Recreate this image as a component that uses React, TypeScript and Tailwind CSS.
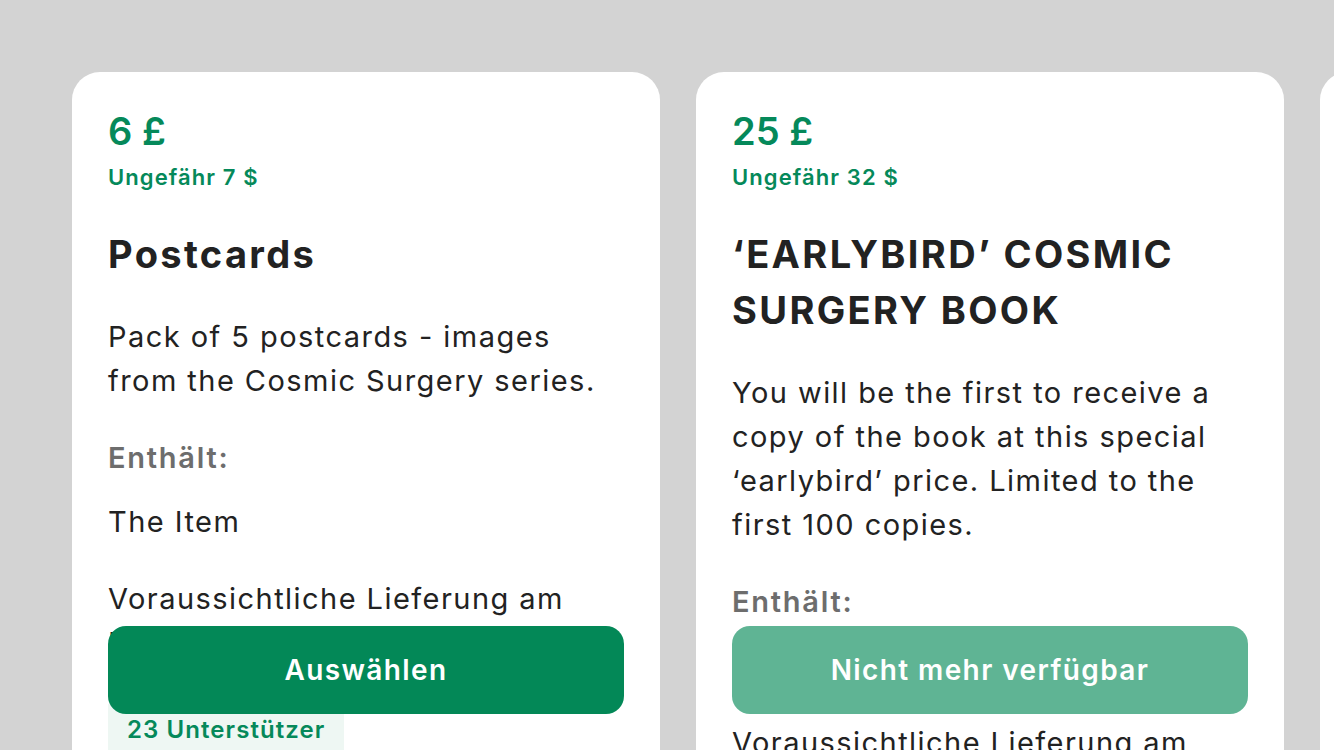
import React from "react";

interface Reward {
  price: string;
  approx: string;
  title: string;
  description: string;
  includes: string[];
  delivery: string;
  backers?: string;
  available: boolean;
}

const rewards: Reward[] = [
  {
    price: "6 £",
    approx: "Ungefähr 7 $",
    title: "Postcards",
    description: "Pack of 5 postcards - images from the Cosmic Surgery series.",
    includes: ["The Item"],
    delivery: "Voraussichtliche Lieferung am Dez. 2018",
    backers: "23 Unterstützer",
    available: true,
  },
  {
    price: "25 £",
    approx: "Ungefähr 32 $",
    title: "‘EARLYBIRD’ COSMIC SURGERY BOOK",
    description:
      "You will be the first to receive a copy of the book at this special ‘earlybird’ price. Limited to the first 100 copies.",
    includes: ["The Item"],
    delivery: "Voraussichtliche Lieferung am Dez. 2018",
    backers: "100 Unterstützer",
    available: false,
  },
  {
    price: "30 £",
    approx: "Ungefähr 38 $",
    title: "Cosmic Surgery Book",
    description: "A copy of the book.",
    includes: ["The Item"],
    delivery: "Voraussichtliche Lieferung am Dez. 2018",
    available: true,
  },
];

function RewardCard({ reward }: { reward: Reward }) {
  return (
    <article className="relative h-[760px] w-[588px] shrink-0 overflow-hidden rounded-[28px] bg-white px-9 pt-9">
      <p className="text-[38px] font-semibold leading-[46px] text-[#05895a]">{reward.price}</p>
      <p className="mt-[9px] text-[22px] font-semibold leading-[28px] tracking-[0.05em] text-[#05895a]">
        {reward.approx}
      </p>
      <h2 className="mt-[35px] text-[38px] font-bold leading-[56px] tracking-[0.062em] text-[#222222]">
        {reward.title}
      </h2>
      <p className="mt-[33px] text-[29px] leading-[44px] tracking-[0.05em] text-[#222222]">{reward.description}</p>
      <p className="mt-[33px] text-[29px] font-semibold leading-[44px] tracking-[0.06em] text-[#6d6d6d]">
        Enthält:
      </p>
      {reward.includes.map((item) => (
        <p key={item} className="mt-[20px] text-[29px] leading-[44px] tracking-[0.05em] text-[#222222]">
          {item}
        </p>
      ))}
      <p className="mt-[33px] text-[29px] leading-[44px] tracking-[0.05em] text-[#222222]">{reward.delivery}</p>
      {reward.backers ? (
        <div className="mt-[39px] inline-flex h-[52px] items-center bg-[#eef7f3] px-[19px] text-[24px] font-semibold tracking-[0.045em] text-[#05895a]">
          {reward.backers}
        </div>
      ) : null}
      <button
        className={
          "absolute left-9 right-9 top-[554px] flex h-[88px] items-center justify-center rounded-[18px] text-[28px] font-semibold tracking-[0.05em] text-white " +
          (reward.available ? "bg-[#038857]" : "bg-[#5fb494]")
        }
      >
        {reward.available ? "Auswählen" : "Nicht mehr verfügbar"}
      </button>
    </article>
  );
}

export default function App() {
  return (
    <div
      className="flex h-[750px] w-[1334px] gap-9 overflow-hidden bg-[#d3d3d3] pl-[72px] pt-[72px]"
      style={{ fontFamily: "Inter, 'Noto Sans', sans-serif" }}
    >
      {rewards.map((reward) => (
        <RewardCard key={reward.title} reward={reward} />
      ))}
    </div>
  );
}
